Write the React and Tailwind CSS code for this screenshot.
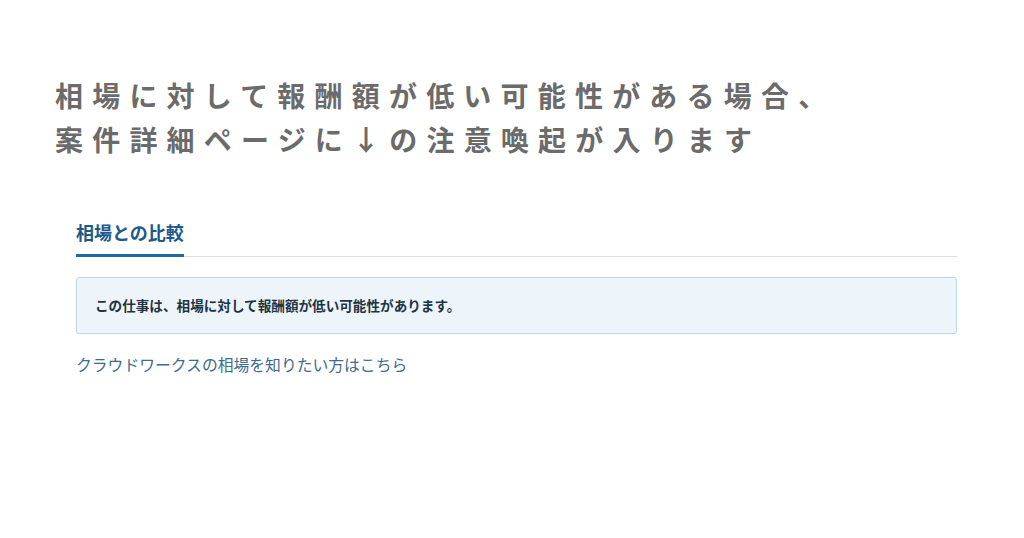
import React from 'react';

const jp = { fontFamily: '"Noto Sans CJK JP", "Noto Sans", sans-serif' };

export default function App() {
  return (
    <div className="w-[1024px] h-[538px] bg-white overflow-hidden" style={jp}>
      {/* Headline */}
      <div className="pt-[73px] pl-[55px] text-[28px] leading-[44px] font-bold tracking-[9.2px] text-[#6b6b6b]">
        <p>相場に対して報酬額が低い可能性がある場合、</p>
        <p>案件詳細ページに↓の注意喚起が入ります</p>
      </div>

      {/* Comparison section */}
      <div className="mt-[59px] ml-[76px] w-[881px]">
        <div className="flex border-b border-[#dedede]">
          <div className="-mb-px border-b-[3px] border-[#1c6aa8] pb-[10px] text-[18px] leading-[24px] font-bold text-[#1d5a8a]">
            相場との比較
          </div>
        </div>

        <div className="mt-[20px] h-[57px] flex items-center px-[18px] rounded-[3px] border border-[#bcd7e8] bg-[#edf5fb] text-[13.6px] font-bold text-[#1f3342]">
          この仕事は、相場に対して報酬額が低い可能性があります。
        </div>

        <div className="mt-[19px] text-[15.8px] leading-[24px] text-[#3d6c8e]">
          クラウドワークスの相場を知りたい方はこちら
        </div>
      </div>
    </div>
  );
}
